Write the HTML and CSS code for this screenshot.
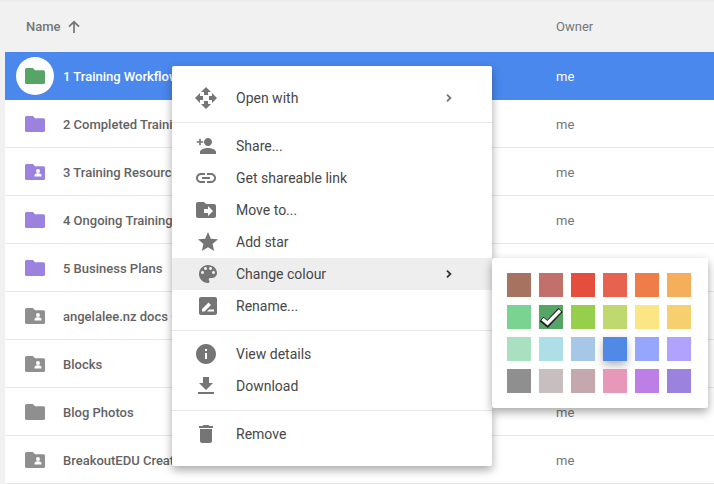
FILE: index.html
```html
<!DOCTYPE html>
<html lang="en">
<head>
<meta charset="utf-8">
<title>Drive</title>
<link rel="stylesheet" href="styles.css">
</head>
<body>
<svg class="defs" width="0" height="0" aria-hidden="true">
  <symbol id="folder" viewBox="0 0 20 16"><path d="M1.500 0H8l2 2.300h8.500A1.500 1.500 0 0 1 20 3.800v10.700a1.500 1.500 0 0 1-1.500 1.500h-17A1.500 1.500 0 0 1 0 14.500V1.500A1.500 1.500 0 0 1 1.500 0z"/></symbol>
  <symbol id="shared" viewBox="0 0 20 16"><path fill-rule="evenodd" d="M1.500 0H8l2 2.300h8.500A1.500 1.500 0 0 1 20 3.800v10.700a1.500 1.500 0 0 1-1.500 1.500h-17A1.500 1.500 0 0 1 0 14.500V1.500A1.500 1.500 0 0 1 1.500 0zM13 5a2 2 0 1 0 0 4 2 2 0 0 0 0-4zM9.500 11.200v1.300h7v-1.300c0-1.300-2.300-1.900-3.500-1.900s-3.500.6-3.500 1.900z"/></symbol>
</svg>
<main class="page">
  <header class="head">
    <div class="head-name">Name
      <svg class="sort" viewBox="0 0 14 14"><path d="M7 13V2M2 6.700 7 1.800l5 4.900" fill="none" stroke="#757575" stroke-width="1.700"/></svg>
    </div>
    <div class="head-owner">Owner</div>
  </header>
  <section class="rows">
    <div class="row selected">
      <span class="badge"><svg class="fi green"><use href="#folder"/></svg></span>
      <span class="name">1 Training Workflow</span><span class="owner">me</span>
    </div>
    <div class="row"><svg class="fi purple"><use href="#folder"/></svg><span class="name">2 Completed Training</span><span class="owner">me</span></div>
    <div class="row"><svg class="fi purple"><use href="#shared"/></svg><span class="name">3 Training Resources</span><span class="owner">me</span></div>
    <div class="row"><svg class="fi purple"><use href="#folder"/></svg><span class="name">4 Ongoing Training</span><span class="owner">me</span></div>
    <div class="row"><svg class="fi purple"><use href="#folder"/></svg><span class="name">5 Business Plans</span><span class="owner">me</span></div>
    <div class="row"><svg class="fi grey"><use href="#shared"/></svg><span class="name">angelalee.nz docs - website</span><span class="owner">me</span></div>
    <div class="row"><svg class="fi grey"><use href="#shared"/></svg><span class="name">Blocks</span><span class="owner">me</span></div>
    <div class="row"><svg class="fi grey"><use href="#folder"/></svg><span class="name">Blog Photos</span><span class="owner">me</span></div>
    <div class="row"><svg class="fi grey"><use href="#shared"/></svg><span class="name">BreakoutEDU Creations</span><span class="owner">me</span></div>
  </section>
</main>

<nav class="menu">
  <div class="mgroup">
    <div class="mi"><svg class="ic" viewBox="0 0 24 24"><path d="M10 9h4V6h3l-5-5-5 5h3v3zm-1 1H6V7l-5 5 5 5v-3h3v-4zm14 2l-5-5v3h-3v4h3v3l5-5zm-9 3h-4v3H7l5 5 5-5h-3v-3z"/></svg><span class="ml">Open with</span><svg class="chev" viewBox="0 0 6 8"><path d="M1 .7 4.400 4 1 7.300" fill="none" stroke="#757575" stroke-width="1.800"/></svg></div>
  </div>
  <div class="mgroup">
    <div class="mi"><svg class="ic" viewBox="0 0 24 24"><path d="M14 12c2.210 0 4-1.790 4-4s-1.790-4-4-4-4 1.790-4 4 1.790 4 4 4zm0 2c-2.670 0-8 1.340-8 4v2h16v-2c0-2.660-5.330-4-8-4zM5.200 4.700h1.600v2.500h2.500v1.600H6.800v2.500H5.200V8.800H2.700V7.200h2.500z"/></svg><span class="ml">Share...</span></div>
    <div class="mi"><svg class="ic" viewBox="0 0 24 24"><path d="M3.900 12c0-1.710 1.390-3.100 3.100-3.100h4V7H7c-2.760 0-5 2.240-5 5s2.240 5 5 5h4v-1.900H7c-1.710 0-3.100-1.390-3.100-3.100zM8 13h8v-2H8v2zm9-6h-4v1.900h4c1.710 0 3.100 1.390 3.100 3.100s-1.390 3.100-3.100 3.100h-4V17h4c2.760 0 5-2.240 5-5s-2.240-5-5-5z"/></svg><span class="ml">Get shareable link</span></div>
    <div class="mi"><svg class="ic" viewBox="0 0 24 24"><path fill-rule="evenodd" d="M20 6h-8l-2-2H4c-1.100 0-2 .9-2 2v12c0 1.100.9 2 2 2h16c1.100 0 2-.9 2-2V8c0-1.100-.9-2-2-2zm-6 12v-3h-4v-4h4V8l5 5-5 5z"/></svg><span class="ml">Move to...</span></div>
    <div class="mi"><svg class="ic shifted" viewBox="0 0 24 24"><path d="M12 17.270 18.180 21l-1.640-7.030L22 9.240l-7.190-.61L12 2 9.190 8.630 2 9.240l5.460 4.730L5.820 21z"/></svg><span class="ml tight">Add star</span></div>
    <div class="mi active"><svg class="ic shifted" viewBox="0 0 24 24"><path d="M12 3c-4.970 0-9 4.030-9 9s4.030 9 9 9c.83 0 1.500-.67 1.500-1.500 0-.39-.15-.74-.39-1.010-.23-.26-.38-.61-.38-.99 0-.83.67-1.500 1.500-1.500H16c2.760 0 5-2.240 5-5 0-4.420-4.030-8-9-8zm-5.500 9c-.83 0-1.500-.67-1.500-1.500S5.670 9 6.500 9 8 9.670 8 10.500 7.330 12 6.500 12zm3-4C8.670 8 8 7.330 8 6.500S8.670 5 9.500 5s1.500.67 1.500 1.500S10.330 8 9.500 8zm5 0c-.83 0-1.500-.67-1.500-1.500S13.670 5 14.500 5s1.500.67 1.500 1.500S15.330 8 14.500 8zm3 4c-.83 0-1.500-.67-1.500-1.500S16.670 9 17.500 9s1.500.67 1.500 1.500-.67 1.500-1.500 1.500z"/></svg><span class="ml tight">Change colour</span><svg class="chev" viewBox="0 0 6 8"><path d="M1 .7 4.400 4 1 7.300" fill="none" stroke="#333" stroke-width="1.800"/></svg></div>
    <div class="mi"><svg class="ic shifted" viewBox="0 0 24 24"><path fill-rule="evenodd" d="M19 3H5c-1.100 0-2 .9-2 2v14c0 1.100.9 2 2 2h14c1.100 0 2-.9 2-2V5c0-1.100-.9-2-2-2zM6 17.500V15l6.500-6.500 2.500 2.500-6.500 6.500zM11 17.500h7v-2h-5z"/></svg><span class="ml tight">Rename...</span></div>
  </div>
  <div class="mgroup">
    <div class="mi"><svg class="ic" viewBox="0 0 24 24"><path d="M12 2C6.480 2 2 6.480 2 12s4.480 10 10 10 10-4.480 10-10S17.520 2 12 2zm1 15h-2v-6h2v6zm0-8h-2V7h2v2z"/></svg><span class="ml">View details</span></div>
    <div class="mi"><svg class="ic" viewBox="0 0 24 24"><path d="M19 9h-4V3H9v6H5l7 7 7-7zM4 18v2h16v-2H4z"/></svg><span class="ml">Download</span></div>
  </div>
  <div class="mgroup last">
    <div class="mi"><svg class="ic" viewBox="0 0 24 24"><path d="M6 19c0 1.100.9 2 2 2h8c1.100 0 2-.9 2-2V7H6v12zM19 4h-3.500l-1-1h-5l-1 1H5v2h14V4z"/></svg><span class="ml">Remove</span></div>
  </div>
</nav>

<div class="palette">
  <span class="sw c01"></span><span class="sw c02"></span><span class="sw c03"></span><span class="sw c04"></span><span class="sw c05"></span><span class="sw c06"></span>
  <span class="sw c07"></span>
  <span class="sw c08"><svg class="check" viewBox="0 0 24 24"><path d="M2.500 14l6 5L21.500 5" fill="none" stroke="#222" stroke-width="6"/><path d="M3.500 14l5 4.200L21 5.500" fill="none" stroke="#fff" stroke-width="3.400"/></svg></span>
  <span class="sw c09"></span><span class="sw c10"></span><span class="sw c11"></span><span class="sw c12"></span>
  <span class="sw c13"></span><span class="sw c14"></span><span class="sw c15"></span><span class="sw c16"></span><span class="sw c17"></span><span class="sw c18"></span>
  <span class="sw c19"></span><span class="sw c20"></span><span class="sw c21"></span><span class="sw c22"></span><span class="sw c23"></span><span class="sw c24"></span>
</div>
</body>
</html>
```
FILE: styles.css
```css
* { box-sizing: border-box; }
html, body { margin: 0; height: 100%; overflow: hidden; }
body { background: #f1f1f1; font-family: Roboto, "Liberation Sans", sans-serif; position: relative; }
.defs { position: absolute; }
.page { width: 714px; }
.head { height: 52px; display: flex; align-items: center; border-top: 2px solid #ececec; padding-bottom: 1px; font-weight: 500; color: #757575; }
.head-name { width: 556px; padding-left: 26px; display: flex; align-items: center; gap: 6px; font-size: 13px; }
.head-owner { font-weight: 400; font-size: 13px; }
.sort { width: 14px; height: 14px; }
.rows { margin-left: 5px; background: #fff; }
.row { height: 48px; display: flex; align-items: center; border-bottom: 1px solid #e8e8e8; padding: 1px 0 0 20px; font-size: 13px; color: #636363; font-weight: 500; }
.fi { width: 20px; height: 16px; flex: none; }
.purple { fill: #9b82de; }
.grey { fill: #8f8f8f; }
.green { fill: #57a566; }
.name { margin-left: 18px; width: 493px; white-space: nowrap; overflow: hidden; }
.owner { font-weight: 400; font-size: 13px; color: #757575; }
.selected { background: #4a88ee; color: #fff; border-bottom: 0; padding-top: 0; }
.selected .owner { color: #fff; }
.badge { width: 38px; height: 38px; border-radius: 50%; background: #fff; display: flex; align-items: center; justify-content: center; margin: 0 -9px; flex: none; }
.menu { position: absolute; left: 172px; top: 66px; width: 320px; height: 400px; background: #fff; border-radius: 2px; box-shadow: 0 4px 10px rgba(0,0,0,.35); padding-top: 16px; font-size: 14px; color: #474747; }
.mgroup { border-bottom: 1px solid #e8e8e8; padding-bottom: 8px; margin-bottom: 7px; }
.mgroup.last { border-bottom: 0; }
.mi { height: 32px; display: flex; align-items: center; padding-left: 22px; }
.active { background: #eeeeee; }
.ic { width: 24px; height: 24px; fill: #757575; flex: none; }
.shifted { margin-left: 2px; }
.ml { margin-left: 18px; flex: 1; }
.ml.tight { margin-left: 16px; }
.chev { width: 6px; height: 8px; margin-right: 40px; }
.palette { position: absolute; left: 492px; top: 258px; width: 216px; height: 150px; background: #fff; border-radius: 2px; box-shadow: 0 4px 10px rgba(0,0,0,.35); padding: 15px; display: grid; grid-template-columns: repeat(6, 24px); grid-auto-rows: 24px; gap: 8px; }
.sw { display: block; position: relative; }
.check { position: absolute; left: 0; top: 0; width: 24px; height: 24px; }
.c01 { background: #a5735f; } .c02 { background: #c2706a; } .c03 { background: #e54d3d; } .c04 { background: #e8634f; } .c05 { background: #ef7d4a; } .c06 { background: #f5ae5a; }
.c07 { background: #7ad391; } .c08 { background: #57a566; } .c09 { background: #95cf4c; } .c10 { background: #c0d96f; } .c11 { background: #fbe683; } .c12 { background: #f6d06f; }
.c13 { background: #a8e0c0; } .c14 { background: #aedfe6; } .c15 { background: #a6c8e6; } .c16 { background: #518ae6; box-shadow: 0 4px 8px rgba(0,0,0,.3); } .c17 { background: #96a6fb; } .c18 { background: #b0a2fd; }
.c19 { background: #8f8f8f; } .c20 { background: #c7bfbf; } .c21 { background: #c5a8ad; } .c22 { background: #e797b7; } .c23 { background: #bd7fe5; } .c24 { background: #9b82de; }
```
